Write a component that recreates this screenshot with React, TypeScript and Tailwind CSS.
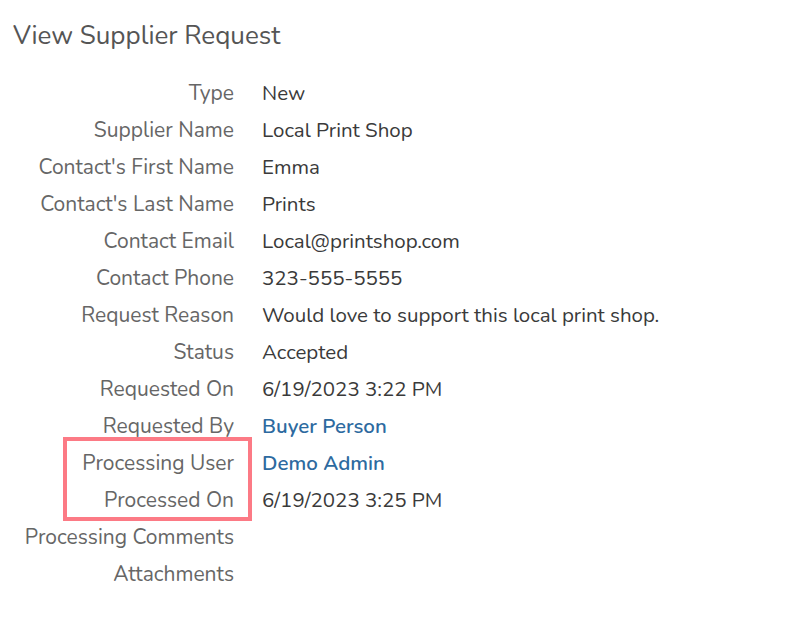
import React from "react";

const rows: { label: string; value?: string; link?: boolean }[] = [
  { label: "Type", value: "New" },
  { label: "Supplier Name", value: "Local Print Shop" },
  { label: "Contact's First Name", value: "Emma" },
  { label: "Contact's Last Name", value: "Prints" },
  { label: "Contact Email", value: "Local@printshop.com" },
  { label: "Contact Phone", value: "323-555-5555" },
  { label: "Request Reason", value: "Would love to support this local print shop." },
  { label: "Status", value: "Accepted" },
  { label: "Requested On", value: "6/19/2023 3:22 PM" },
  { label: "Requested By", value: "Buyer Person", link: true },
  { label: "Processing User", value: "Demo Admin", link: true },
  { label: "Processed On", value: "6/19/2023 3:25 PM" },
  { label: "Processing Comments" },
  { label: "Attachments" },
];

export default function App() {
  return (
    <div
      className="relative w-[785px] h-[625px] bg-white"
      style={{ fontFamily: "Nunito, 'Open Sans', 'Noto Sans', sans-serif" }}
    >
      <h1 className="pl-[13px] pt-[19px] text-[26px] leading-[34px] text-[#555555]">
        View Supplier Request
      </h1>
      <div className="mt-[22px] flex flex-col">
        {rows.map((r) => (
          <div key={r.label} className="flex h-[37px] items-center">
            <div className="w-[234px] shrink-0 text-right text-[21px] text-[#666666] whitespace-nowrap">
              {r.label}
            </div>
            <div
              className={
                "ml-[28px] whitespace-nowrap text-[20.5px] " +
                (r.link ? "text-[#2d6a9f] font-semibold" : "text-[#3a3a3a]")
              }
            >
              {r.value}
            </div>
          </div>
        ))}
      </div>
      <div className="absolute left-[63px] top-[437px] w-[189px] h-[84px] border-4 border-[#fc7a85]" />
    </div>
  );
}
